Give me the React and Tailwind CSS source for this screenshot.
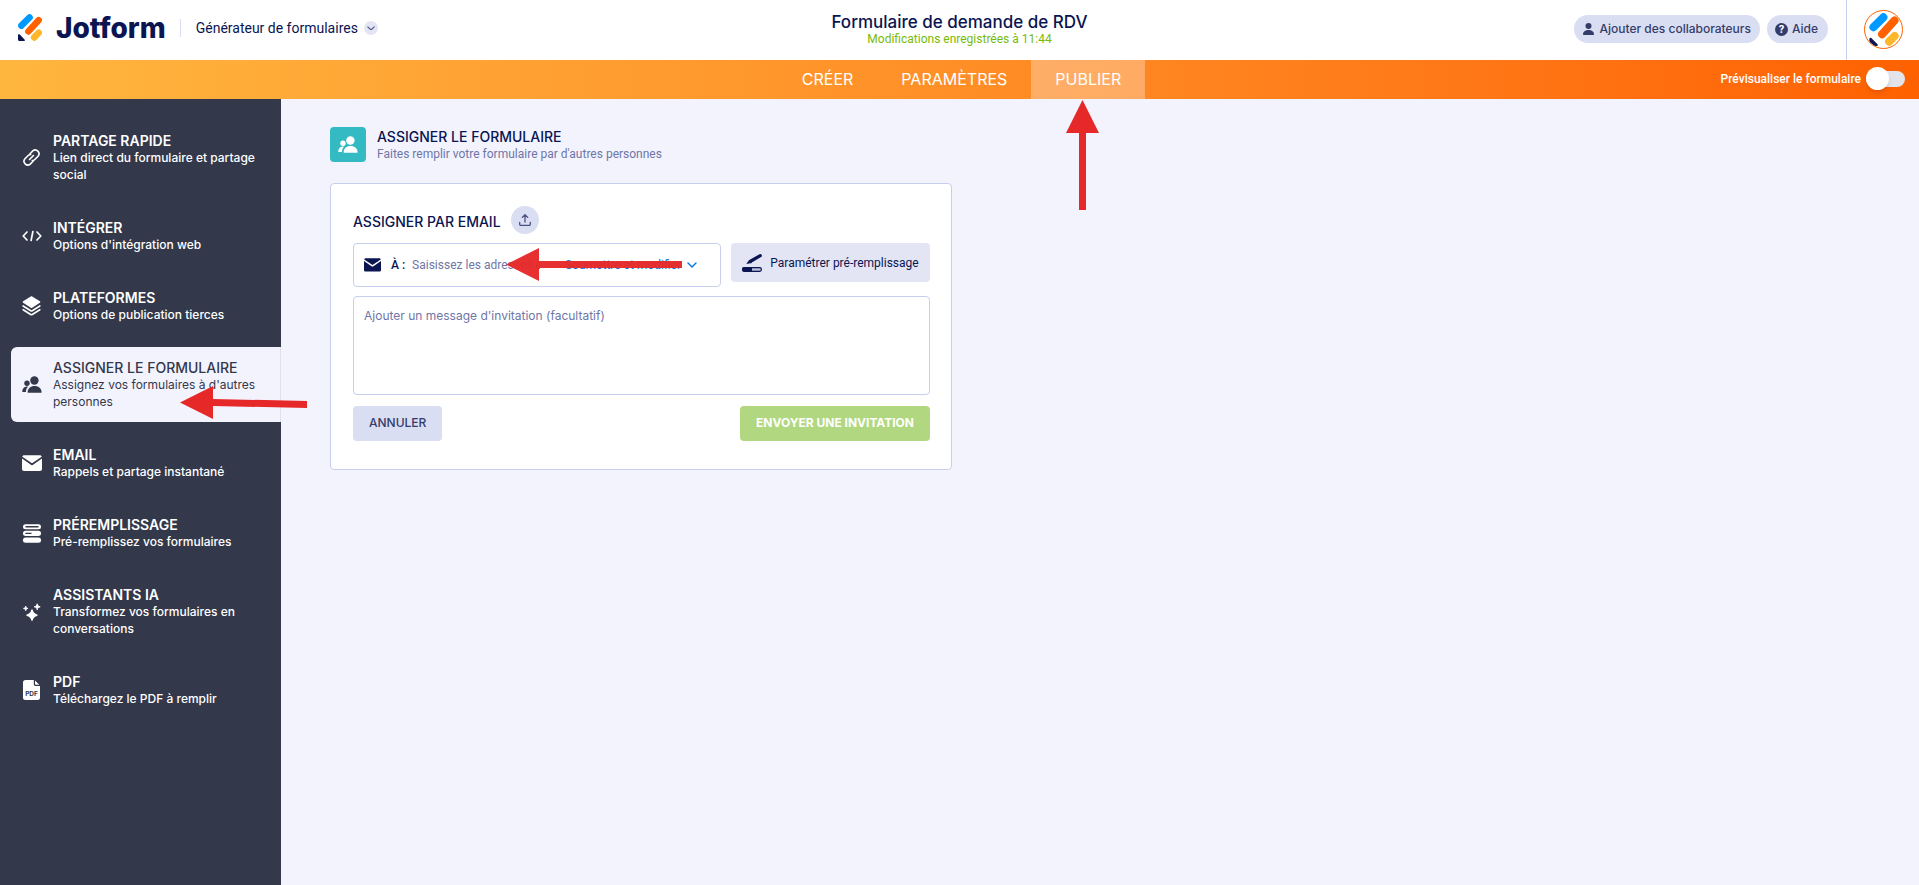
import React, { useState } from "react";

const UsersIcon = ({ className }) => (
  <svg viewBox="0 0 20 17" fill="currentColor" className={className} aria-hidden="true">
    <circle cx="12.4" cy="4.5" r="4.2" />
    <circle cx="5" cy="7.2" r="2.7" />
    <path d="M5.6 16.2c0-3.6 2.9-6.2 7-6.2s7 2.6 7 6.2c0 .4-.3.6-.6.6H6.2c-.3 0-.6-.2-.6-.6z" />
    <path d="M.3 15.5c0-2.7 1.9-4.9 4.9-4.9.5 0 .8.1.8.1-1.300 1.300-2.100 3-2.100 5.400H.8c-.3 0-.5-.2-.5-.6z" />
  </svg>
);

const MailIcon = ({ className }) => (
  <svg viewBox="0 0 20 16" fill="currentColor" className={className} aria-hidden="true">
    <path d="M.3 1.700C.5.7 1.200.2 2.200.2h15.600c1 0 1.700.5 1.900 1.500L10 8.200z" />
    <path d="M0 3.600l9.300 6.300c.4.300 1 .3 1.400 0L20 3.600V14c0 1.200-.8 2-2 2H2c-1.200 0-2-.8-2-2z" />
  </svg>
);

const LinkIcon = ({ className }) => (
  <svg viewBox="0 0 20 20" fill="none" stroke="currentColor" strokeWidth="1.900" strokeLinecap="round" className={className} aria-hidden="true">
    <path d="M8.200 5.600l3.300-3.300a4.400 4.400 0 0 1 6.200 6.200l-3.800 3.800a4.400 4.400 0 0 1-3 1.300" />
    <path d="M11.800 14.400l-3.300 3.300a4.400 4.400 0 0 1-6.200-6.200l3.800-3.800a4.400 4.400 0 0 1 3-1.300" />
    <path d="M7.700 12.300l4.600-4.600" />
  </svg>
);

const CodeIcon = ({ className }) => (
  <svg viewBox="0 0 20 12" fill="none" stroke="currentColor" strokeWidth="1.700" strokeLinecap="round" strokeLinejoin="round" className={className} aria-hidden="true">
    <path d="M5 2L1.200 6 5 10M15 2l3.800 4L15 10M10.900 1.500l-1.800 9" />
  </svg>
);

const LayersIcon = ({ className }) => (
  <svg viewBox="0 0 20 21" fill="currentColor" className={className} aria-hidden="true">
    <path d="M9.200.6c.5-.3 1.100-.3 1.600 0l8 4.900c.6.400.6 1.200 0 1.600l-8 5.200c-.5.300-1.100.3-1.600 0l-8-5.200c-.6-.4-.6-1.200 0-1.600z" />
    <path d="M1.200 10.500l8 5c.5.300 1.100.3 1.600 0l8-5M1.200 14.500l8 5c.5.300 1.100.3 1.600 0l8-5" fill="none" stroke="currentColor" strokeWidth="1.700" strokeLinecap="round" />
  </svg>
);

const PrefillIcon = ({ className }) => (
  <svg viewBox="0 0 18 19" fill="currentColor" className={className} aria-hidden="true">
    <path fillRule="evenodd" d="M2.500.3h13a2.500 2.500 0 0 1 0 5h-13a2.500 2.500 0 0 1 0-5zM3 2.100a.7.7 0 0 0 0 1.400h12a.7.7 0 0 0 0-1.400z" />
    <path fillRule="evenodd" d="M2.500 6.800h13a2.500 2.500 0 0 1 0 5.200h-13a2.500 2.500 0 0 1 0-5.200zM3 8.700a.7.7 0 0 0 0 1.400h5.500V8.700z" />
    <rect y="13.500" width="18" height="5.200" rx="2.500" />
  </svg>
);

const SparkleIcon = ({ className }) => (
  <svg viewBox="0 0 18 18" fill="currentColor" className={className} aria-hidden="true">
    <path d="M9 7c.8 3.500 1.800 4.500 5 5.200-3.200.8-4.200 1.800-5 5-.8-3.200-1.800-4.200-5-5 3.200-.7 4.200-1.700 5-5.200z" stroke="currentColor" strokeWidth="1.400" strokeLinejoin="round" />
    <path d="M14.200.8c.4 2 1 2.600 3 3-2 .4-2.600 1-3 3-.4-2-1-2.600-3-3 2-.4 2.600-1 3-3z" stroke="currentColor" strokeLinejoin="round" />
    <path d="M2.700 3.200c.3 1.500.7 1.900 2.200 2.200-1.500.3-1.900.7-2.200 2.200-.3-1.500-.7-1.900-2.200-2.200 1.500-.3 1.900-.7 2.200-2.200z" stroke="currentColor" strokeLinejoin="round" />
  </svg>
);

const PdfIcon = ({ className }) => (
  <svg viewBox="0 0 17 20" className={className} aria-hidden="true">
    <path d="M2.500 0h8.300v4.200c0 1 .7 1.700 1.700 1.700H17v11.800c0 1.300-1 2.300-2.300 2.300H2.300C1 20 0 19 0 17.700V2.500C0 1 1 0 2.500 0z" fill="currentColor" />
    <path d="M12 .6l4.300 4.200h-3.500c-.5 0-.8-.3-.8-.8z" fill="currentColor" />
    <text x="8.500" y="15.600" textAnchor="middle" fontSize="6.500" fontWeight="700" fill="#33384b">PDF</text>
  </svg>
);

const UserIcon = ({ className }) => (
  <svg viewBox="0 0 11 12" fill="currentColor" className={className} aria-hidden="true">
    <circle cx="5.500" cy="3.100" r="3" />
    <path d="M0 11.300C0 8.600 2.300 7 5.500 7s5.500 1.600 5.500 4.300c0 .4-.2.6-.6.6H.6c-.4 0-.6-.2-.6-.6z" />
  </svg>
);

const Chevron = ({ className }) => (
  <svg viewBox="0 0 10 6" fill="none" stroke="currentColor" strokeWidth="1.400" strokeLinecap="round" strokeLinejoin="round" className={className} aria-hidden="true">
    <path d="M1 1l4 4 4-4" />
  </svg>
);

const UploadIcon = ({ className }) => (
  <svg viewBox="0 0 12 12" fill="none" stroke="currentColor" strokeWidth="1.300" strokeLinecap="round" strokeLinejoin="round" className={className} aria-hidden="true">
    <path d="M6 8V1M3.300 3.400L6 .8l2.700 2.600M.7 8.500v1.700c0 .7.5 1.200 1.200 1.200h8.200c.7 0 1.200-.5 1.200-1.200V8.500" />
  </svg>
);

const PenIcon = ({ className }) => (
  <svg viewBox="0 0 20 18" className={className} aria-hidden="true">
    <path d="M9 7L18.300 1.700" stroke="currentColor" strokeWidth="3.200" strokeLinecap="round" />
    <path d="M4.800 9.600l2.800-3.700 2 2.900z" fill="currentColor" stroke="currentColor" strokeWidth=".6" strokeLinejoin="round" />
    <rect x=".6" y="13.700" width="18.800" height="3.600" rx="1.800" fill="#b9bdd8" stroke="currentColor" strokeWidth="1.200" />
    <path d="M2.400 13.100H10v4.800H2.400a2.400 2.400 0 0 1 0-4.800z" fill="currentColor" />
  </svg>
);

const LogoMark = ({ className }) => (
  <svg viewBox="0 0 24 27" fill="none" strokeWidth="6.600" strokeLinecap="round" className={className} aria-hidden="true">
    <path d="M3.400 11.600l8.100-8.100" stroke="#0099ff" />
    <path d="M10.400 17.400L20.600 6.200" stroke="#ff6100" />
    <path d="M16.200 23.400l4.500-4.600" stroke="#ffb629" />
    <path d="M0 21.500c0-1.300 1-1.700 1.800-.9l4.700 4.800c.8.800.4 1.600-.8 1.600H1.500C.6 27 0 26.400 0 25.500z" fill="#0a1551" />
  </svg>
);

const ArrowLeft = ({ className }) => (
  <svg viewBox="0 0 176 34" fill="#e62828" fillOpacity=".96" className={className} aria-hidden="true">
    <path d="M0 16.500L33 0v13h143v7H33v13z" />
  </svg>
);

const menuItems = [
  { title: "PARTAGE RAPIDE", text: "Lien direct du formulaire et partage social", Icon: LinkIcon, size: "w-[17px]" },
  { title: "INTÉGRER", text: "Options d'intégration web", Icon: CodeIcon, size: "w-[20px]" },
  { title: "PLATEFORMES", text: "Options de publication tierces", Icon: LayersIcon, size: "w-[19px]" },
  { title: "ASSIGNER LE FORMULAIRE", text: "Assignez vos formulaires à d'autres personnes", Icon: UsersIcon, size: "w-[20px]", active: true },
  { title: "EMAIL", text: "Rappels et partage instantané", Icon: MailIcon, size: "w-[20px]" },
  { title: "PRÉREMPLISSAGE", text: "Pré-remplissez vos formulaires", Icon: PrefillIcon, size: "w-[18px]" },
  { title: "ASSISTANTS IA", text: "Transformez vos formulaires en conversations", Icon: SparkleIcon, size: "w-[18px]" },
  { title: "PDF", text: "Téléchargez le PDF à remplir", Icon: PdfIcon, size: "w-[17px]" },
];

const Header = () => (
  <header className="grid h-[60px] grid-cols-[1fr_auto_1fr] items-center bg-white">
    <div className="flex items-center pb-1 pl-[18px]">
      <a href="#" className="flex items-center gap-[14px]">
        <LogoMark className="mb-[2px] h-[27px] w-6" />
        <span className="text-[28px] leading-8 font-extrabold text-[#0a1551]">Jotform</span>
      </a>
      <span className="ml-[14px] h-[18px] w-px bg-[#dadef3]" />
      <button className="ml-[15px] flex items-center gap-[6px] font-['Roboto',sans-serif] text-sm text-[#0a1551]">
        Générateur de formulaires
        <span className="flex size-[14px] items-center justify-center rounded-full bg-[#e3e5f5] text-[#4f5680]">
          <Chevron className="w-2" />
        </span>
      </button>
    </div>
    <div className="pb-[2px] text-center">
      <h1 className="text-[17px] leading-5 font-medium text-[#0a1551]">Formulaire de demande de RDV</h1>
      <p className="font-['Roboto',sans-serif] text-xs leading-[14px] text-[#78bb07]">Modifications enregistrées à 11:44</p>
    </div>
    <div className="flex h-full items-center justify-end text-xs font-medium text-[#343c6a]">
      <button className="mb-[2px] flex h-7 items-center gap-[6px] rounded-full bg-[#dadef3] px-[9px]">
        <UserIcon className="w-[11px]" />
        Ajouter des collaborateurs
      </button>
      <button className="mb-[2px] ml-[7px] flex h-7 items-center gap-1 rounded-full bg-[#dadef3] pr-[10px] pl-2">
        <span className="flex size-[13px] items-center justify-center rounded-full bg-[#343c6a] text-[10px] leading-none font-bold text-white">?</span>
        Aide
      </button>
      <span className="ml-[18px] h-full w-px bg-[#c8ceed]" />
      <button aria-label="Compte" className="mr-4 mb-[2px] ml-[17px] flex size-[39px] items-center justify-center overflow-hidden rounded-full border border-[#ff6100]">
        <LogoMark className="h-[33px] w-[30px]" />
      </button>
    </div>
  </header>
);

const NavBar = () => {
  const [preview, setPreview] = useState(false);

  return (
    <nav className="grid h-[39px] grid-cols-[1fr_auto_1fr] items-center bg-linear-to-r from-[#ffb63f] to-[#ff6100]">
      <div />
      <div className="flex h-full pl-1 text-base text-white">
        <button className="px-6 pb-[2px]">CRÉER</button>
        <button className="px-6 pb-[2px]">PARAMÈTRES</button>
        <button className="relative bg-white/30 px-6 pb-[2px]">
          PUBLIER
          <svg viewBox="0 0 34 110" fill="#e62828" className="absolute top-10 left-[35px] z-10 w-[34px]" aria-hidden="true">
            <path d="M16.500 0L33 33H20v77h-7V33H0z" />
          </svg>
        </button>
      </div>
      <label className="flex items-center justify-end gap-[5px] pr-[14px] pb-[2px] font-['Roboto',sans-serif] text-xs font-medium text-white">
        Prévisualiser le formulaire
        <input type="checkbox" checked={preview} onChange={() => setPreview(!preview)} className="peer sr-only" />
        <span className="flex h-4 w-[39px] items-center rounded-full bg-[#e3e3ea] peer-checked:justify-end">
          <span className="size-[23px] rounded-full bg-white shadow-md" />
        </span>
      </label>
    </nav>
  );
};

const Sidebar = () => (
  <aside className="w-[281px] shrink-0 bg-[#33384b] pt-[21px] pl-[11px]">
    <ul className="flex flex-col gap-3">
      {menuItems.map(({ title, text, Icon, size, active }) => (
        <li key={title} className="relative">
          <a
            href="#"
            className={`flex items-center gap-[11px] rounded-l-md py-3 pr-6 pl-[10px] ${active ? "border-r border-[#dfdfee] bg-[#f3f3fe] text-[#33384b]" : "text-white"}`}
          >
            <span className="flex w-[21px] justify-center">
              <Icon className={size} />
            </span>
            <span className="flex-1">
              <span className={`block text-sm leading-[17px] ${active ? "font-medium" : "font-semibold"}`}>{title}</span>
              <span className={`block text-xs leading-[17px] ${active ? "" : "font-medium"}`}>{text}</span>
            </span>
          </a>
          {active && (
            <svg viewBox="0 0 128 33" fill="#e62828" className="absolute top-[39px] left-[169px] z-10 w-32" aria-hidden="true">
              <path d="M0 16.500L33 0v13l94 2v7l-94-2v13z" />
            </svg>
          )}
        </li>
      ))}
    </ul>
  </aside>
);

const AssignForm = () => {
  const [email, setEmail] = useState("");
  const [message, setMessage] = useState("");

  return (
    <form onSubmit={(e) => e.preventDefault()} className="mt-[21px] w-full max-w-[622px] rounded border border-[#c8ceed] bg-white pt-[22px] pr-[21px] pb-7 pl-[22px]">
      <div className="flex items-center gap-[10px]">
        <h3 className="pt-1 text-sm font-medium text-[#0a1551]">ASSIGNER PAR EMAIL</h3>
        <button type="button" aria-label="Importer" className="flex size-7 items-center justify-center rounded-full bg-[#dadef3] text-[#4a4f80]">
          <UploadIcon className="w-3" />
        </button>
      </div>

      <div className="mt-[9px] flex items-start gap-[10px] font-['Roboto',sans-serif]">
        <div className="relative flex h-11 flex-1 items-center rounded border border-[#c8ceed] px-[10px] text-xs">
          <MailIcon className="w-[17px] text-[#0a1551]" />
          <label htmlFor="emails" className="ml-[10px] font-medium text-[#0a1551]">À :</label>
          <input
            id="emails"
            value={email}
            onChange={(e) => setEmail(e.target.value)}
            placeholder="Saisissez les adresses e-mail"
            className="ml-[7px] w-[128px] placeholder-[#6f76a7] outline-none"
          />
          <button type="button" className="mr-[13px] ml-auto flex items-center gap-[6px] text-[#0075e3]">
            Soumettre et modifier
            <Chevron className="w-[10px]" />
          </button>
          <ArrowLeft className="absolute top-1 left-[152px] w-[176px]" />
        </div>
        <button type="button" className="flex h-[39px] w-[199px] items-center justify-center gap-2 rounded bg-[#e3e5f5] text-xs text-[#0a1551]">
          <PenIcon className="w-5" />
          Paramétrer pré-remplissage
        </button>
      </div>

      <textarea
        aria-label="Message d'invitation"
        value={message}
        onChange={(e) => setMessage(e.target.value)}
        placeholder="Ajouter un message d'invitation (facultatif)"
        className="mt-[9px] block h-[99px] w-full resize-none rounded border border-[#c8ceed] px-[10px] py-[11px] text-xs leading-4 placeholder-[#6f76a7] outline-none"
      />

      <div className="mt-[11px] flex justify-between text-xs">
        <button type="button" className="h-[35px] rounded bg-[#dadef3] px-4 pb-[2px] font-medium text-[#343c6a]">ANNULER</button>
        <button type="submit" className="h-[35px] rounded bg-[#b1d880] px-4 pb-[2px] font-bold text-white">ENVOYER UNE INVITATION</button>
      </div>
    </form>
  );
};

const App = () => {
  return (
    <div className="flex min-h-screen flex-col bg-[#f3f3fe] font-['Inter',sans-serif]">
      <Header />
      <NavBar />
      <div className="flex flex-1">
        <Sidebar />
        <main className="flex-1 px-[49px] pt-7">
          <div className="flex items-center gap-[11px]">
            <span className="flex h-[35px] w-9 items-center justify-center rounded bg-[#33bac3] text-white">
              <UsersIcon className="w-5" />
            </span>
            <div className="-mb-[2px]">
              <h2 className="text-sm leading-[18px] font-medium text-[#0a1551]">ASSIGNER LE FORMULAIRE</h2>
              <p className="font-['Roboto',sans-serif] text-xs leading-[17px] text-[#6f76a7]">Faites remplir votre formulaire par d'autres personnes</p>
            </div>
          </div>
          <AssignForm />
        </main>
      </div>
    </div>
  );
};

export default App;
